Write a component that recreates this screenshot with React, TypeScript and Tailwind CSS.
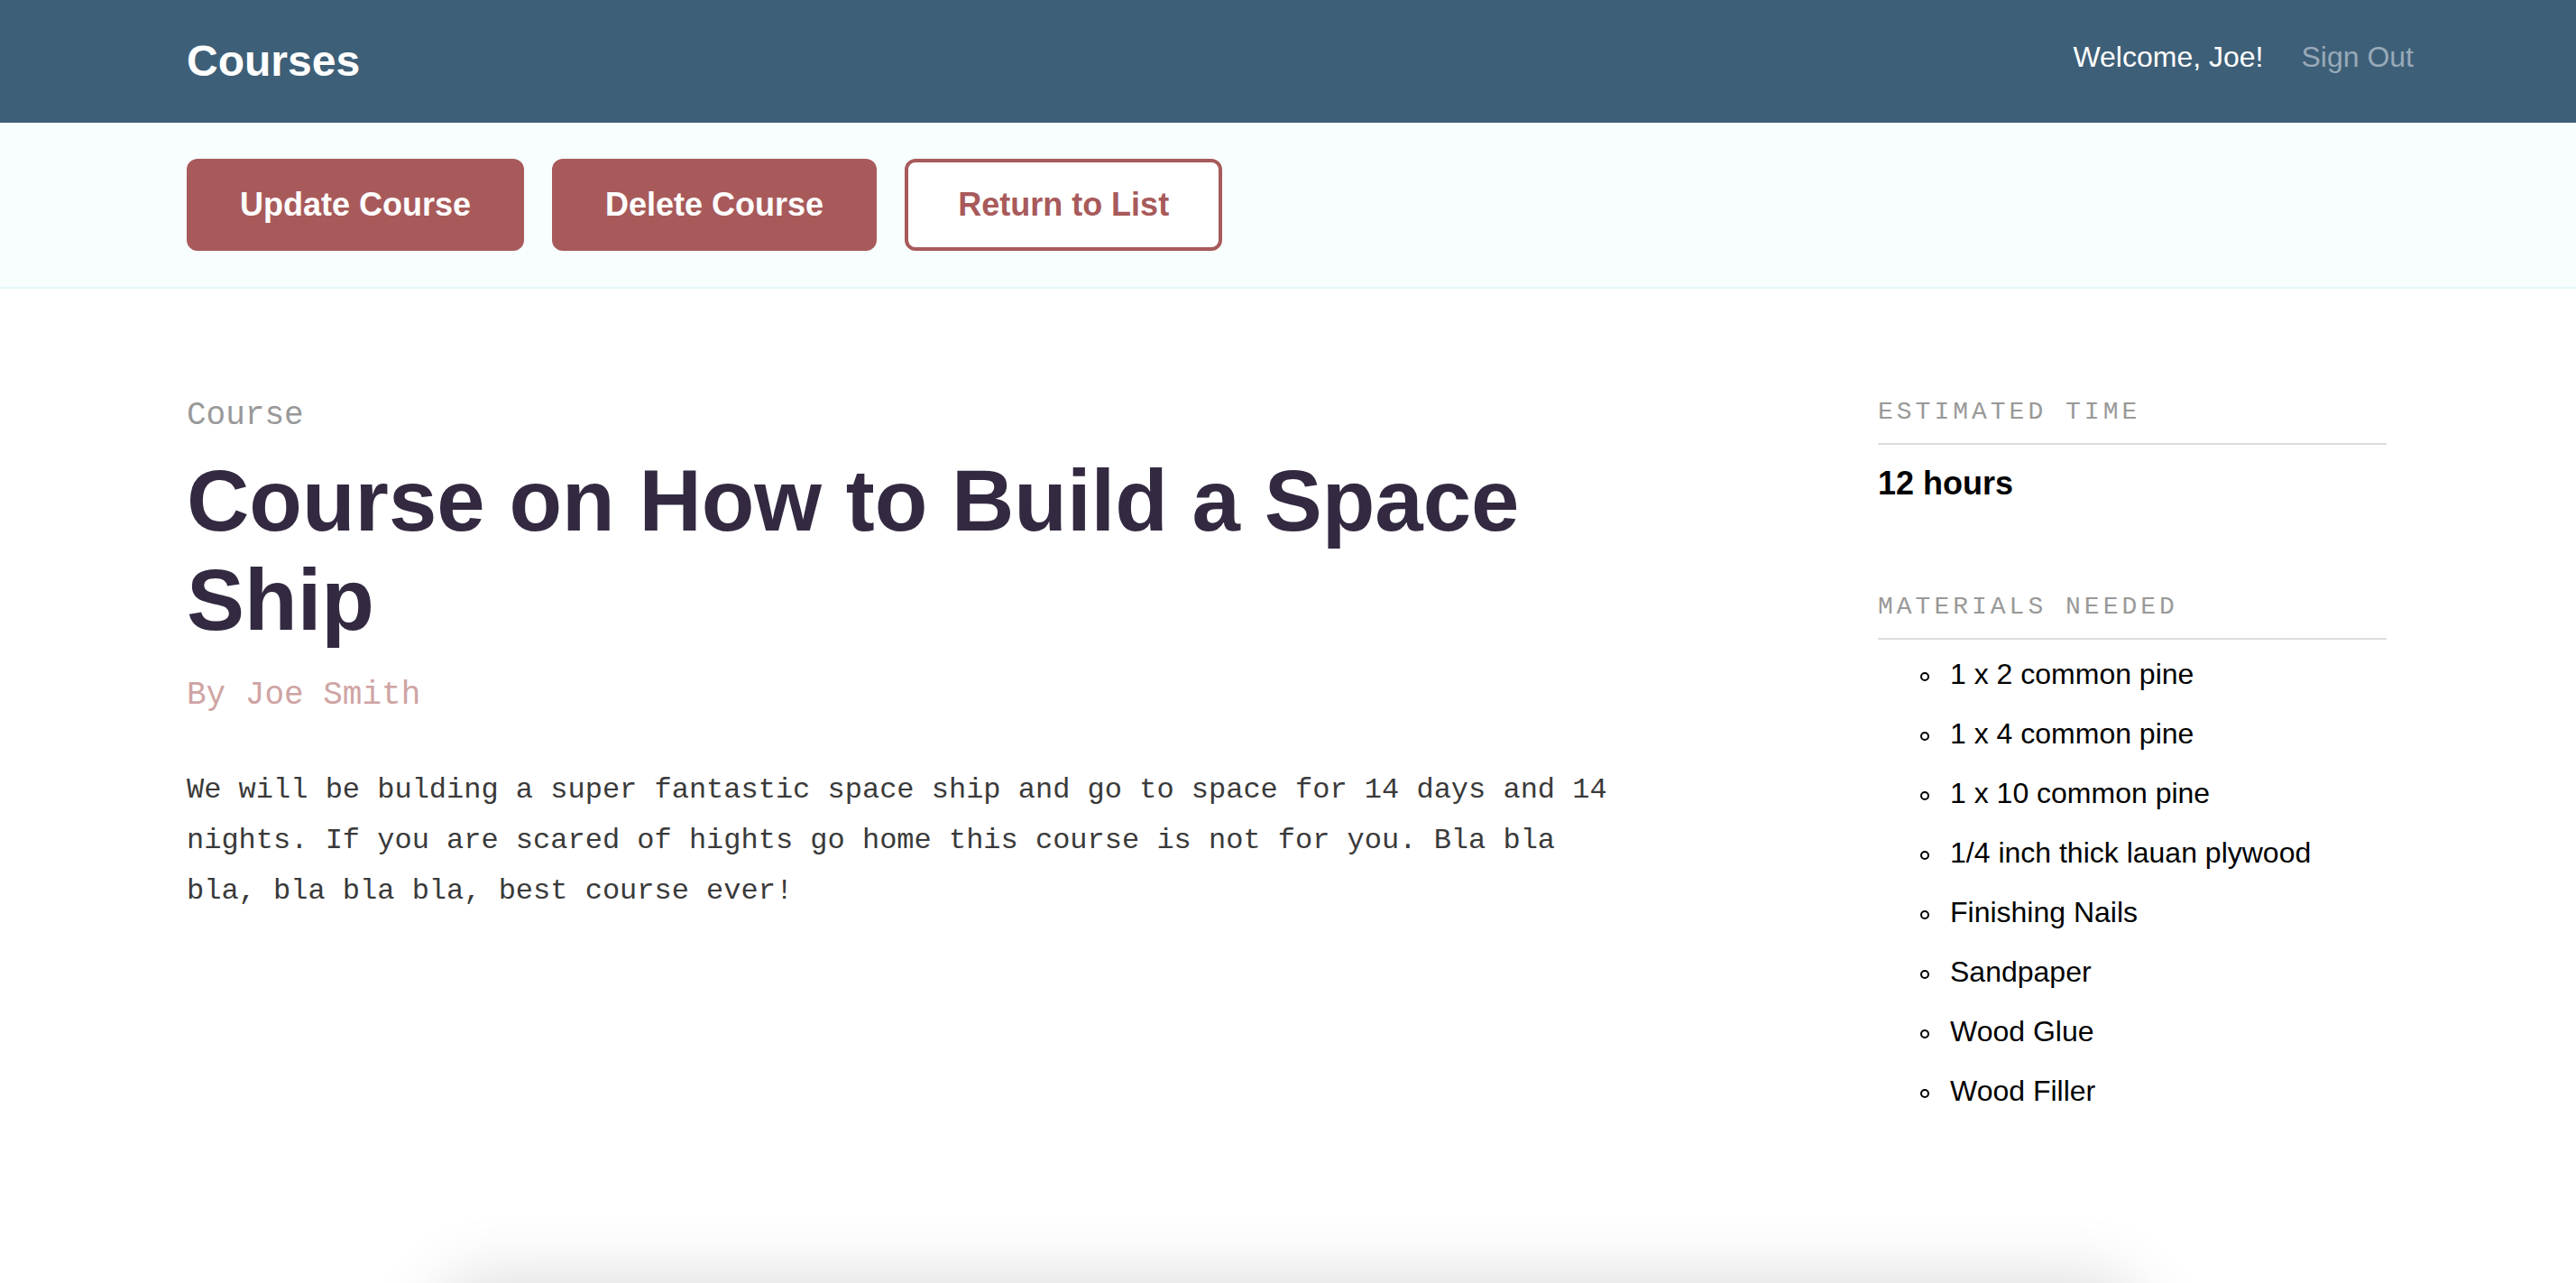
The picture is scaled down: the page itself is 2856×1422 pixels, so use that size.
const materials = [
  "1 x 2 common pine",
  "1 x 4 common pine",
  "1 x 10 common pine",
  "1/4 inch thick lauan plywood",
  "Finishing Nails",
  "Sandpaper",
  "Wood Glue",
  "Wood Filler",
];

const sans = "font-['Liberation_Sans',Arial,Helvetica,sans-serif]";
const mono = "font-['Liberation_Mono','Courier_New',monospace]";

export default function App() {
  return (
    <div className={`flex h-[1422px] flex-col overflow-hidden bg-white ${sans}`}>
      {/* Header */}
      <header className="flex h-[136px] shrink-0 items-center justify-between bg-[#3e5f78] pl-[207px] pr-[180px]">
        <h1 className="text-[48px] leading-none font-bold text-white">Courses</h1>
        <nav className="-mt-[10px] flex items-center gap-[42px] text-[32px] leading-none">
          <span className="text-white">Welcome, Joe!</span>
          <a href="#" className="text-[#98aab8]">
            Sign Out
          </a>
        </nav>
      </header>

      {/* Action bar */}
      <div className="flex shrink-0 gap-[31px] border-b-2 border-[#e4f6f9] bg-[#f8fdfe] px-[207px] py-[40px]">
        <button
          type="button"
          className="flex h-[102px] items-center rounded-[12px] bg-[#a85a5b] px-[59px] text-[36px] leading-none font-bold text-white"
        >
          Update Course
        </button>
        <button
          type="button"
          className="flex h-[102px] items-center rounded-[12px] bg-[#a85a5b] px-[59px] text-[36px] leading-none font-bold text-white"
        >
          Delete Course
        </button>
        <button
          type="button"
          className="flex h-[102px] items-center rounded-[12px] border-4 border-[#a85a5b] bg-white px-[55px] text-[36px] leading-none font-bold text-[#a85a5b]"
        >
          Return to List
        </button>
      </div>

      {/* Course detail */}
      <main className="flex h-[1102px] shrink-0 justify-between pt-[123px] pl-[207px] pr-[210px]">
        <div className="w-[1600px]">
          <p className={`${mono} text-[36px] leading-none text-[#999999]`}>Course</p>
          <h2 className="mt-[21px] text-[96px] leading-[110px] font-bold text-[#332a41]">
            Course on How to Build a Space Ship
          </h2>
          <p className={`${mono} mt-[33px] text-[36px] leading-none text-[#cfa4a4]`}>By Joe Smith</p>
          <p className={`${mono} mt-[59px] text-[32px] leading-[56px] text-[#3a3a3a]`}>
            We will be bulding a super fantastic space ship and go to space for 14 days and 14 nights. If you are
            scared of hights go home this course is not for you. Bla bla bla, bla bla bla, best course ever!
          </p>
        </div>

        <aside className="w-[564px]">
          <h3
            className={`${mono} border-b-2 border-[#dddddd] pb-[20px] text-[28px] leading-none tracking-[4px] text-[#999999]`}
          >
            ESTIMATED TIME
          </h3>
          <p className="mt-[25px] text-[36px] leading-none font-bold text-black">12 hours</p>

          <h3
            className={`${mono} mt-[105px] border-b-2 border-[#dddddd] pb-[20px] text-[28px] leading-none tracking-[4px] text-[#999999]`}
          >
            MATERIALS NEEDED
          </h3>
          <ul className="mt-[5px] pl-[47px] text-[32px] leading-[66px] text-black">
            {materials.map((item) => (
              <li key={item} className="flex items-center gap-[23px]">
                <span className="h-[10px] w-[10px] shrink-0 translate-y-[3px] rounded-full border-2 border-black" />
                {item}
              </li>
            ))}
          </ul>
        </aside>
      </main>

      {/* Next card peeking in from below */}
      <div className="mx-auto h-[300px] w-[1880px] shrink-0 rounded-t-[40px] bg-white shadow-[0_0_80px_rgba(0,0,0,0.16)]" />
    </div>
  );
}
